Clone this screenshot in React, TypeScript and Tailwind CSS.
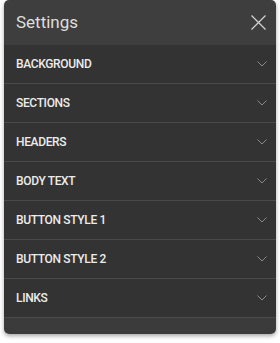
const sections = [
  'BACKGROUND',
  'SECTIONS',
  'HEADERS',
  'BODY TEXT',
  'BUTTON STYLE 1',
  'BUTTON STYLE 2',
  'LINKS',
]

function Chevron() {
  return (
    <svg width="10" height="6" viewBox="0 0 10 6" fill="none" className="text-[#8a8a8a]">
      <path d="M0.5 0.5 L5 5 L9.5 0.5" stroke="currentColor" strokeWidth="1" />
    </svg>
  )
}

function CloseIcon() {
  return (
    <svg width="15" height="15" viewBox="0 0 15 15" fill="none" className="text-[#d4d4d4]">
      <path d="M0.5 0.5 L14.5 14.5 M14.5 0.5 L0.5 14.5" stroke="currentColor" strokeWidth="1.2" />
    </svg>
  )
}

function Row({ label }: { label: string }) {
  return (
    <div className="flex h-[39px] items-center justify-between border-b border-[#4a4a4a] pr-[9px] pl-[12px]">
      <span className="text-[12px] font-medium tracking-[-0.35px] text-[#ececec]">{label}</span>
      <Chevron />
    </div>
  )
}

export default function App() {
  return (
    <div
      className="h-[343px] w-[280px] bg-white px-[4px]"
      style={{ fontFamily: 'Roboto, "Noto Sans", sans-serif' }}
    >
      <div className="overflow-hidden rounded-[5px] shadow-[0_2px_4px_rgba(0,0,0,0.35)]">
        <div className="flex h-[45px] items-center justify-between bg-[#3e3e3e] pr-[10px] pl-[12px]">
          <span className="text-[17px] text-[#dedede]">Settings</span>
          <CloseIcon />
        </div>
        <div className="bg-[#333333]">
          {sections.map((s) => (
            <Row key={s} label={s} />
          ))}
        </div>
        <div className="h-[16px] bg-[#3b3b3b]" />
      </div>
    </div>
  )
}
